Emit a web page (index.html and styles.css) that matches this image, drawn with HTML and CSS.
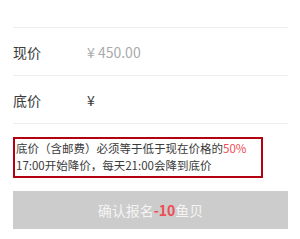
FILE: index.html
```html
<!DOCTYPE html>
<html lang="zh-CN">
<head>
    <meta charset="UTF-8">
    <meta name="viewport" content="width=device-width, initial-scale=1.0">
    <title>报名</title>
    <link rel="stylesheet" href="styles.css">
</head>
<body>
    <div class="form">
        <div class="top-gap"></div>

        <div class="row">
            <span class="label">现价</span>
            <span class="value muted">¥ 450.00</span>
        </div>
        <div class="row">
            <span class="label">底价</span>
            <span class="value">¥</span>
        </div>

        <div class="notice">
            <p>底价（含邮费）必须等于低于现在价格的<span class="red">50%</span></p>
            <p>17:00开始降价，每天21:00会降到底价</p>
        </div>

        <button class="submit">确认报名<span class="red">-10</span>鱼贝</button>
    </div>
</body>
</html>
```

FILE: styles.css
```css
body {
    margin: 0;
    background-color: #fff;
    color: #333;
    font-family: "Noto Sans CJK SC", sans-serif;
    text-spacing-trim: space-all;
}
.form {
    padding: 0 12px 0 13px;
}
.top-gap {
    height: 27px;
    border-bottom: 1px solid #ededed;
}
.row {
    display: flex;
    align-items: center;
    height: 47px;
    border-bottom: 1px solid #ededed;
    font-size: 14px;
}
.label {
    width: 74px;
    color: #3a3a3a;
}
.value {
    color: #3a3a3a;
}
.value.muted {
    color: #aaa;
}
.notice {
    box-sizing: border-box;
    width: 250px;
    height: 41px;
    margin-top: 13px;
    padding: 1px 0 0 1px;
    border: 2px solid #b4000f;
    font-size: 11.5px;
    line-height: 17px;
    color: #3a3a3a;
}
.notice p {
    margin: 0;
    white-space: nowrap;
}
.red {
    color: #ee4d55;
}
.submit {
    display: block;
    width: 100%;
    height: 38px;
    margin-top: 13px;
    border: none;
    background-color: #cccccc;
    color: #f4f4f4;
    font-family: inherit;
    font-size: 14px;
}
.submit .red {
    font-weight: bold;
}
```
